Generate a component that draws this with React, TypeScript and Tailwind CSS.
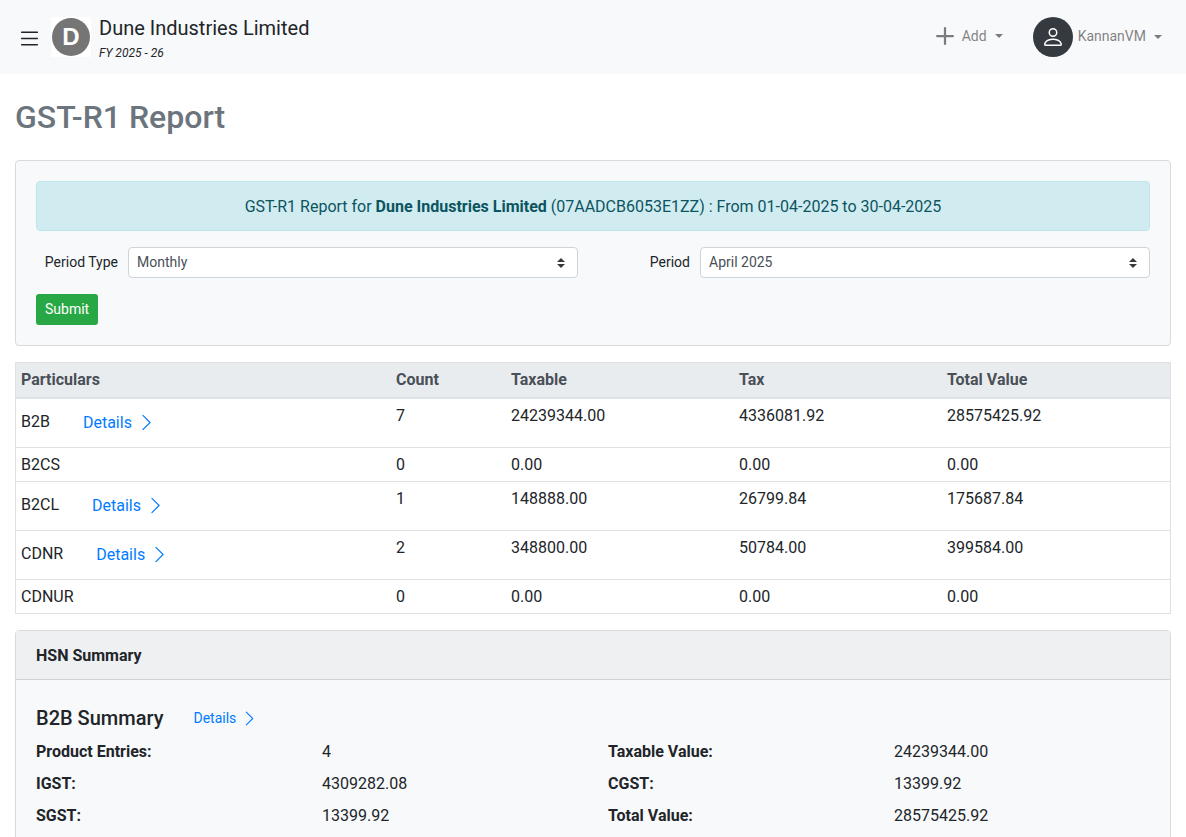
import React from 'react';
import { BsChevronRight, BsList, BsPerson, BsPlus } from 'react-icons/bs';

interface ReportRow {
  name: string;
  count: number;
  taxable: string;
  tax: string;
  total: string;
  hasDetails?: boolean;
}

const rows: ReportRow[] = [
  { name: 'B2B', count: 7, taxable: '24239344.00', tax: '4336081.92', total: '28575425.92', hasDetails: true },
  { name: 'B2CS', count: 0, taxable: '0.00', tax: '0.00', total: '0.00' },
  { name: 'B2CL', count: 1, taxable: '148888.00', tax: '26799.84', total: '175687.84', hasDetails: true },
  { name: 'CDNR', count: 2, taxable: '348800.00', tax: '50784.00', total: '399584.00', hasDetails: true },
  { name: 'CDNUR', count: 0, taxable: '0.00', tax: '0.00', total: '0.00' },
];

const columns = ['Particulars', 'Count', 'Taxable', 'Tax', 'Total Value'];

const summary = [
  ['Product Entries:', '4'],
  ['Taxable Value:', '24239344.00'],
  ['IGST:', '4309282.08'],
  ['CGST:', '13399.92'],
  ['SGST:', '13399.92'],
  ['Total Value:', '28575425.92'],
];

const Caret = () => (
  <span className="border-x-4 border-t-4 border-x-transparent border-t-black/50" />
);

interface SelectProps {
  id: string;
  label: string;
  options: string[];
}

const SelectField: React.FC<SelectProps> = ({ id, label, options }) => (
  <div className="flex items-center">
    <label htmlFor={id} className="w-[92px] shrink-0 pr-[10px] pb-[2px] text-right text-sm">{label}</label>
    <div className="relative flex-1">
      <select
        id={id}
        className="block h-[31px] w-full appearance-none rounded border border-[#ced4da] bg-white pb-[2px] pl-2 pr-7 text-sm text-[#495057]"
      >
        {options.map((o) => <option key={o}>{o}</option>)}
      </select>
      <svg viewBox="0 0 4 5" className="pointer-events-none absolute right-[13px] top-[11px] h-[10px] w-2" fill="#343a40">
        <path d="M2 0L0 2h4zm0 5L0 3h4z" />
      </svg>
    </div>
  </div>
);

const Header = () => (
  <header className="flex h-[74px] items-center justify-between bg-[#f8f9fa] pl-[17px] pr-6">
    <div className="flex items-center">
      <button aria-label="Menu" className="mr-[9px] pt-[2px]">
        <BsList size={25} />
      </button>
      <div className="mr-2 flex size-10 items-center justify-center bg-white">
        <span className="flex size-[38px] items-center justify-center rounded-full bg-[#757575] font-['Liberation_Sans',sans-serif] text-2xl font-bold text-white">D</span>
      </div>
      <div className="pt-[2px]">
        <div className="text-xl leading-[30px]">Dune Industries Limited</div>
        <div className="text-xs leading-5 italic">FY 2025 - 26</div>
      </div>
    </div>
    <div className="flex items-center text-sm text-black/50">
      <button className="flex items-center pb-[2px]">
        <BsPlus size={36} />
        <span className="mr-2 -ml-px">Add</span>
        <Caret />
      </button>
      <button className="ml-[30px] flex items-center">
        <span className="mr-[5px] flex size-10 items-center justify-center rounded-full bg-[#343a40] text-white">
          <BsPerson size={24} />
        </span>
        <span className="mr-2 pb-[2px]">KannanVM</span>
        <Caret />
      </button>
    </div>
  </header>
);

const App: React.FC = () => {
  return (
    <div className="h-screen overflow-hidden bg-white font-['Roboto',sans-serif] text-base text-[#212529]">
      <Header />

      <main className="px-[15px]">
        <h1 className="pt-6 pb-6 text-[32px] leading-[38px] font-medium text-[#6c757d]">GST-R1 Report</h1>

        {/* Filter card */}
        <section className="mb-4 rounded border border-[#d8dadc] bg-[#f8f9fa] p-5">
          <div className="mb-4 rounded border border-[#bee5eb] bg-[#d1ecf1] px-5 pt-[13px] pb-[11px] text-center text-[#0c5460]">
            GST-R1 Report for <strong className="font-bold">Dune Industries Limited</strong> (07AADCB6053E1ZZ) : From 01-04-2025 to 30-04-2025
          </div>
          <form onSubmit={(e) => e.preventDefault()}>
            <div className="mb-4 grid grid-cols-2 gap-x-[30px]">
              <SelectField id="period-type" label="Period Type" options={['Monthly', 'Quarterly']} />
              <SelectField id="period" label="Period" options={['April 2025', 'May 2025', 'June 2025']} />
            </div>
            <button type="submit" className="block h-[31px] rounded-[3px] bg-[#28a745] px-[9px] pb-[2px] text-sm text-white">Submit</button>
          </form>
        </section>

        {/* Totals by section */}
        <table className="mb-4 w-full table-fixed border-separate border-spacing-0 border border-[#dee2e6]">
          <colgroup>
            <col className="w-[375px]" />
            <col className="w-[115px]" />
            <col className="w-[228px]" />
            <col className="w-[208px]" />
            <col className="w-[228px]" />
          </colgroup>
          <thead>
            <tr className="bg-[#e9ecef] text-left text-[#495057]">
              {columns.map((c) => (
                <th key={c} className="border-b-2 border-[#dee2e6] p-[5px] font-bold">{c}</th>
              ))}
            </tr>
          </thead>
          <tbody className="[&_td]:border-b [&_td]:border-[#dee2e6] [&_td]:px-[5px] [&_td]:pt-[5px] [&_td]:pb-1 [&_tr:last-child_td]:border-b-0">
            {rows.map((row) => (
              <tr key={row.name} className="align-top">
                {row.hasDetails ? (
                  <td>
                    <div className="flex items-start">
                      <span className="pt-[6px]">{row.name}</span>
                      <a href="#" className="ml-[21px] flex items-center gap-[5px] px-3 pt-[7px] pb-2 text-[#007bff]">
                        Details
                        <BsChevronRight size={19} className="mb-[2px]" />
                      </a>
                    </div>
                  </td>
                ) : (
                  <td>{row.name}</td>
                )}
                <td>{row.count}</td>
                <td>{row.taxable}</td>
                <td>{row.tax}</td>
                <td>{row.total}</td>
              </tr>
            ))}
          </tbody>
        </table>

        {/* HSN summary card */}
        <section className="rounded border border-[#d8dadc] bg-[#f8f9fa]">
          <h2 className="border-b border-[#d0d2d4] bg-[#eff0f2] px-5 pt-[13px] pb-[11px] font-bold">HSN Summary</h2>
          <div className="p-5">
            <div className="mb-2 flex items-center pt-1">
              <h3 className="text-xl font-medium">B2B Summary</h3>
              <a href="#" className="ml-[21px] flex items-center gap-[5px] px-[9px] py-1 text-sm text-[#007bff]">
                Details
                <BsChevronRight size={17} />
              </a>
            </div>
            <dl className="-mr-[30px] grid grid-cols-4 gap-y-2">
              {summary.map(([label, value]) => (
                <React.Fragment key={label}>
                  <dt className="font-bold">{label}</dt>
                  <dd>{value}</dd>
                </React.Fragment>
              ))}
            </dl>
          </div>
        </section>
      </main>
    </div>
  );
};

export default App;
